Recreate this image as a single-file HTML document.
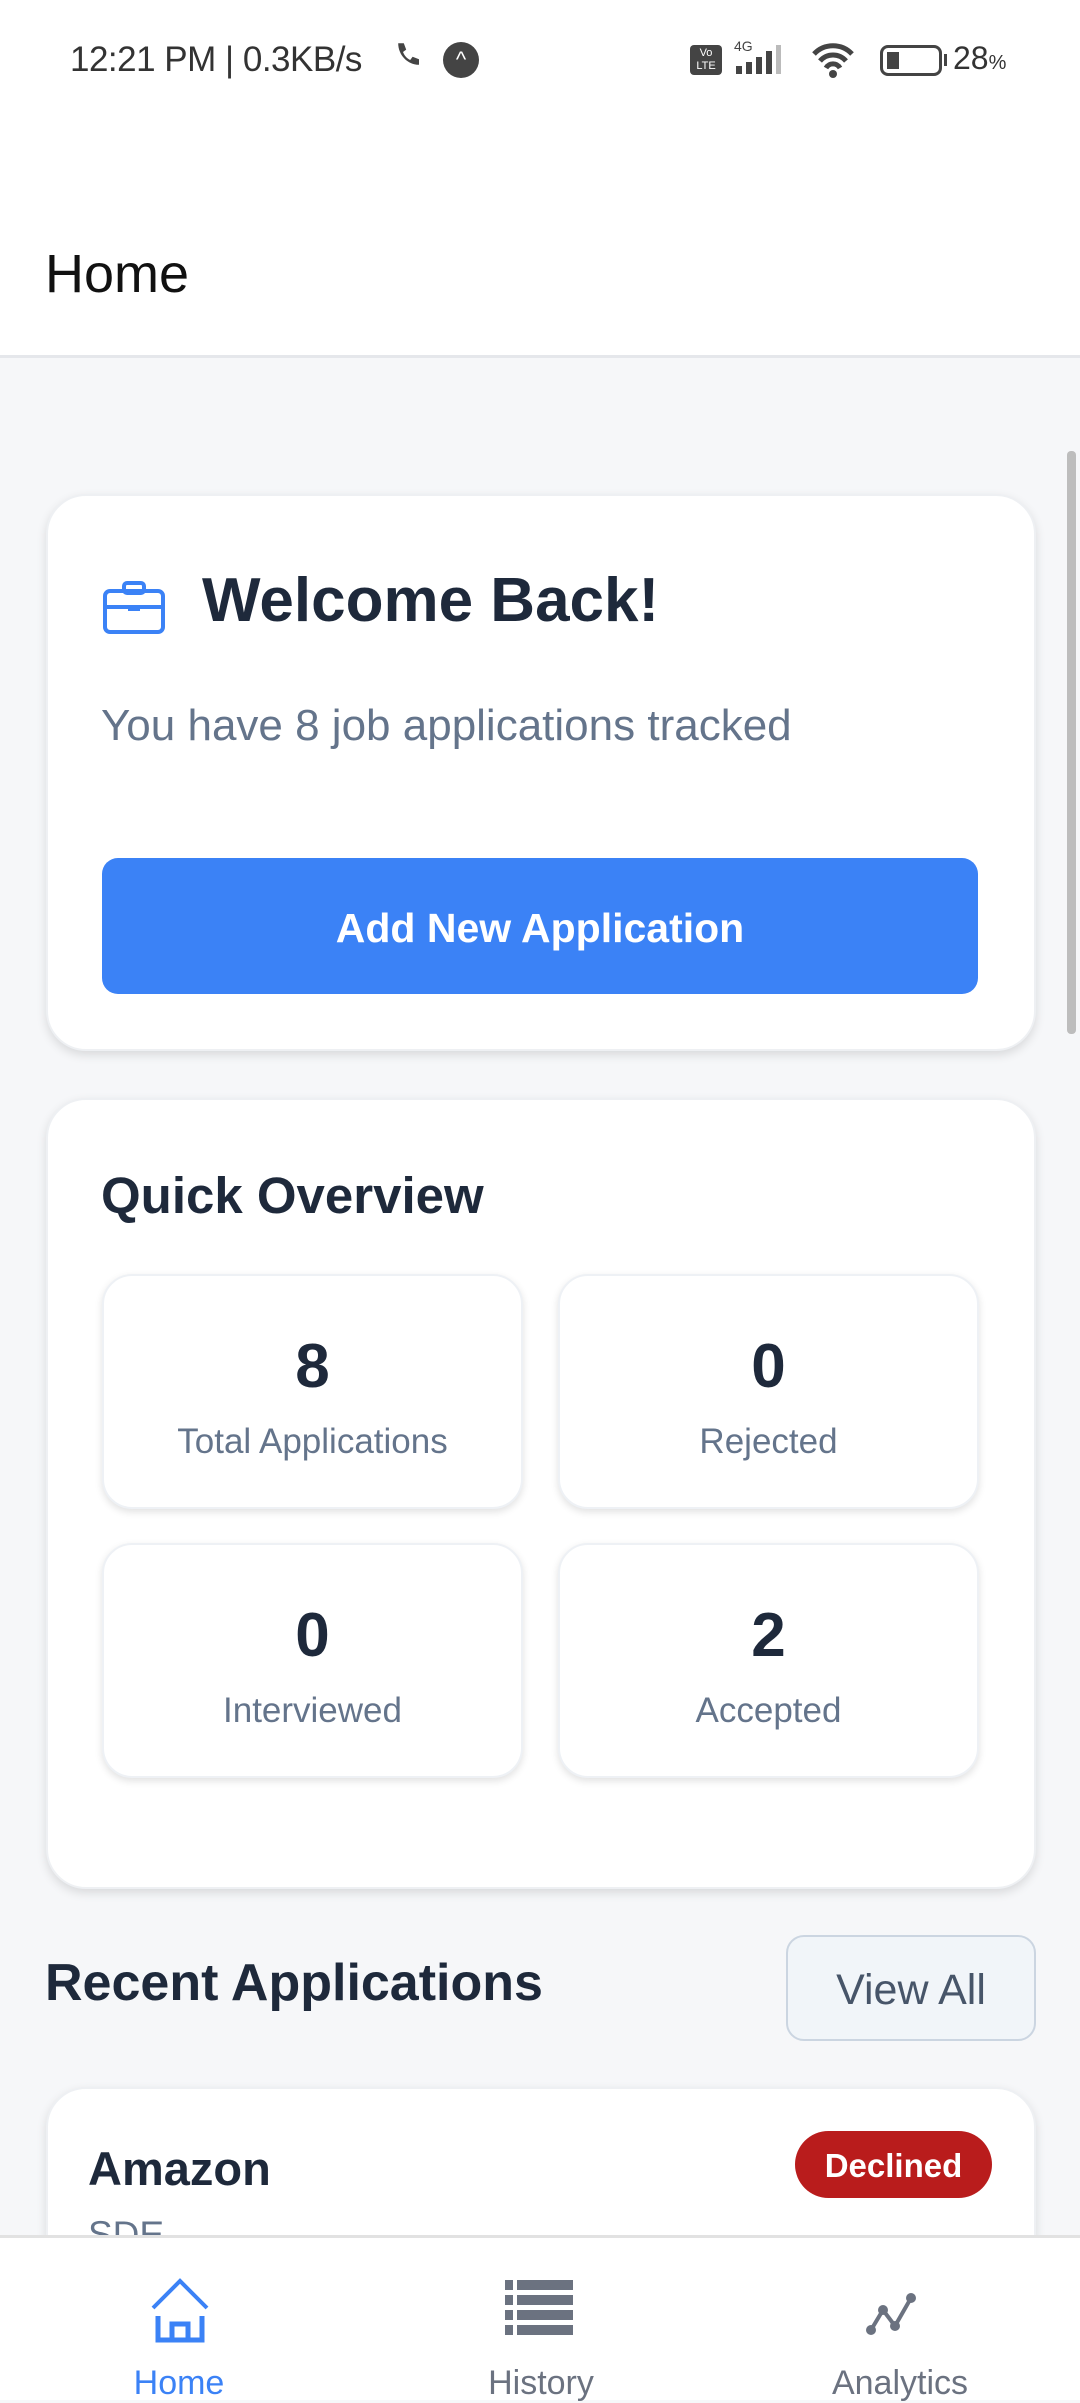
<!DOCTYPE html>
<html><head><meta charset="utf-8"><style>
*{box-sizing:border-box;margin:0;padding:0}
body{width:1080px;height:2400px;overflow:hidden;background:#f6f7f9;font-family:"Liberation Sans",sans-serif;position:relative;color:#1e293b}
.abs{position:absolute}
.status{top:0;left:0;width:1080px;height:130px;background:#fff}
.header{top:130px;left:0;width:1080px;height:228px;background:#fff;border-bottom:3px solid #e5e7eb}
.card{background:#fff;border-radius:40px;box-shadow:0 4px 10px rgba(0,0,0,0.12);border:2px solid #eef0f3}
.stat{background:#fff;border-radius:30px;box-shadow:0 3px 8px rgba(0,0,0,0.12);border:2px solid #eef1f5;text-align:center}
.stat .n{font-size:62px;font-weight:bold;color:#1e293b;margin-top:56px;line-height:70px}
.stat .l{font-size:35px;color:#64748b;margin-top:20px}
.nav{top:2235px;left:0;width:1080px;height:165px;background:#fff;border-top:3px solid #e2e2e2}
.nl{font-size:34px;text-align:center;width:300px}
</style></head><body>
<div class="abs status">
 <div class="abs" style="left:70px;top:40px;font-size:35px;color:#333;letter-spacing:-0.5px">12:21 PM | 0.3KB/s</div>
 <svg class="abs" style="left:395px;top:40px" width="30" height="34" viewBox="0 0 30 34"><path d="M4 4l7 0 3 8-4 3c2 5 5 8 9 10l3-4 8 3v7c-14 0-26-12-26-27z" fill="#444" transform="scale(0.8)"/></svg>
 <div class="abs" style="left:443px;top:42px;width:36px;height:36px;border-radius:50%;background:#444;color:#fff;font-size:22px;text-align:center;line-height:36px">^</div>
 <div class="abs" style="left:690px;top:45px;width:32px;height:30px;background:#444;border-radius:4px;color:#fff;font-size:11px;line-height:13px;text-align:center;padding-top:2px">Vo<br>LTE</div>
 <div class="abs" style="left:734px;top:38px;font-size:14px;color:#444">4G</div>
 <svg class="abs" style="left:732px;top:44px" width="68" height="32"><rect x="4" y="22" width="6" height="8" fill="#444"/><rect x="14" y="18" width="6" height="12" fill="#444"/><rect x="24" y="13" width="6" height="17" fill="#444"/><rect x="34" y="7" width="6" height="23" fill="#444"/><rect x="44" y="1" width="5" height="29" fill="#bbb"/></svg>
 <svg class="abs" style="left:810px;top:40px" width="50" height="40"><path d="M4 14a26 26 0 0 1 38 0M10 21a17 17 0 0 1 26 0M16 28a8 8 0 0 1 14 0" stroke="#444" stroke-width="5" fill="none"/><circle cx="23" cy="34" r="4" fill="#444"/></svg>
 <div class="abs" style="left:880px;top:45px;width:62px;height:31px;border:3px solid #444;border-radius:8px"><div style="margin:4px;width:12px;height:17px;background:#444"></div></div>
 <div class="abs" style="left:944px;top:54px;width:3px;height:12px;background:#444"></div>
 <div class="abs" style="left:953px;top:40px;font-size:32px;color:#333">28<span style="font-size:20px">%</span></div>
</div>
<div class="abs header"><div class="abs" style="left:45px;top:114px;font-size:54px;color:#111;line-height:60px">Home</div></div>
<div class="abs" style="left:1067px;top:451px;width:9px;height:583px;background:#bdbdbd;border-radius:4px"></div>

<div class="abs card" style="left:46px;top:494px;width:990px;height:557px"></div>
<svg class="abs" style="left:103px;top:581px" width="64" height="54" viewBox="0 0 64 54"><rect x="2" y="10" width="58" height="41" rx="5" fill="none" stroke="#3b82f6" stroke-width="4"/><rect x="21" y="2" width="20" height="10" rx="3" fill="none" stroke="#3b82f6" stroke-width="4"/><line x1="2" y1="26" x2="60" y2="26" stroke="#3b82f6" stroke-width="4"/><rect x="25" y="25" width="12" height="5" fill="#3b82f6"/></svg>
<div class="abs" style="left:202px;top:565px;font-size:62px;font-weight:bold;color:#1e293b;line-height:72px">Welcome Back!</div>
<div class="abs" style="left:101px;top:701px;font-size:44px;color:#64748b;line-height:50px">You have 8 job applications tracked</div>
<div class="abs" style="left:102px;top:858px;width:876px;height:136px;background:#3b82f6;border-radius:16px;color:#fff;font-size:41px;font-weight:bold;text-align:center;line-height:140px">Add New Application</div>

<div class="abs card" style="left:46px;top:1098px;width:990px;height:791px"></div>
<div class="abs" style="left:101px;top:1167px;font-size:51px;font-weight:bold;line-height:58px">Quick Overview</div>
<div class="abs stat" style="left:102px;top:1274px;width:421px;height:235px"><div class="n">8</div><div class="l">Total Applications</div></div>
<div class="abs stat" style="left:558px;top:1274px;width:421px;height:235px"><div class="n">0</div><div class="l">Rejected</div></div>
<div class="abs stat" style="left:102px;top:1543px;width:421px;height:235px"><div class="n">0</div><div class="l">Interviewed</div></div>
<div class="abs stat" style="left:558px;top:1543px;width:421px;height:235px"><div class="n">2</div><div class="l">Accepted</div></div>

<div class="abs" style="left:45px;top:1953px;font-size:52px;font-weight:bold;line-height:60px">Recent Applications</div>
<div class="abs" style="left:786px;top:1935px;width:250px;height:106px;background:#f1f5f9;border:2px solid #cbd5e1;border-radius:18px;font-size:43px;color:#475569;text-align:center;line-height:106px">View All</div>

<div class="abs card" style="left:46px;top:2087px;width:990px;height:300px"></div>
<div class="abs" style="left:88px;top:2142px;font-size:47px;font-weight:bold;line-height:54px">Amazon</div>
<div class="abs" style="left:795px;top:2131px;width:197px;height:67px;background:#b91c1c;border-radius:34px;color:#fff;font-size:33px;font-weight:bold;text-align:center;line-height:69px">Declined</div>
<div class="abs" style="left:88px;top:2214px;font-size:37px;color:#64748b">SDE</div>

<div class="abs nav">
 <svg class="abs" style="left:148px;top:40px" width="64" height="66" viewBox="0 0 64 66"><path d="M5 30L32 3 59 30" fill="none" stroke="#3b82f6" stroke-width="4"/><path d="M10 38V62H54V38M24 62V46H40V62" fill="none" stroke="#3b82f6" stroke-width="5"/></svg>
 <div class="abs nl" style="left:29px;top:126px;color:#3b82f6">Home</div>
 <svg class="abs" style="left:505px;top:42px" width="70" height="58"><g fill="#6b7280"><rect x="0" y="0" width="8" height="10"/><rect x="12" y="0" width="56" height="10"/><rect x="0" y="15" width="8" height="10"/><rect x="12" y="15" width="56" height="10"/><rect x="0" y="30" width="8" height="10"/><rect x="12" y="30" width="56" height="10"/><rect x="0" y="45" width="8" height="10"/><rect x="12" y="45" width="56" height="10"/></g></svg>
 <div class="abs nl" style="left:391px;top:126px;color:#6b7280">History</div>
 <svg class="abs" style="left:865px;top:50px" width="70" height="50"><path d="M6 42L18 22 30 38 46 10" fill="none" stroke="#6b7280" stroke-width="4"/><g fill="#6b7280"><circle cx="6" cy="42" r="5"/><circle cx="18" cy="22" r="5"/><circle cx="30" cy="38" r="5"/><circle cx="46" cy="10" r="5"/></g></svg>
 <div class="abs nl" style="left:750px;top:126px;color:#6b7280">Analytics</div>
</div>
</body></html>
